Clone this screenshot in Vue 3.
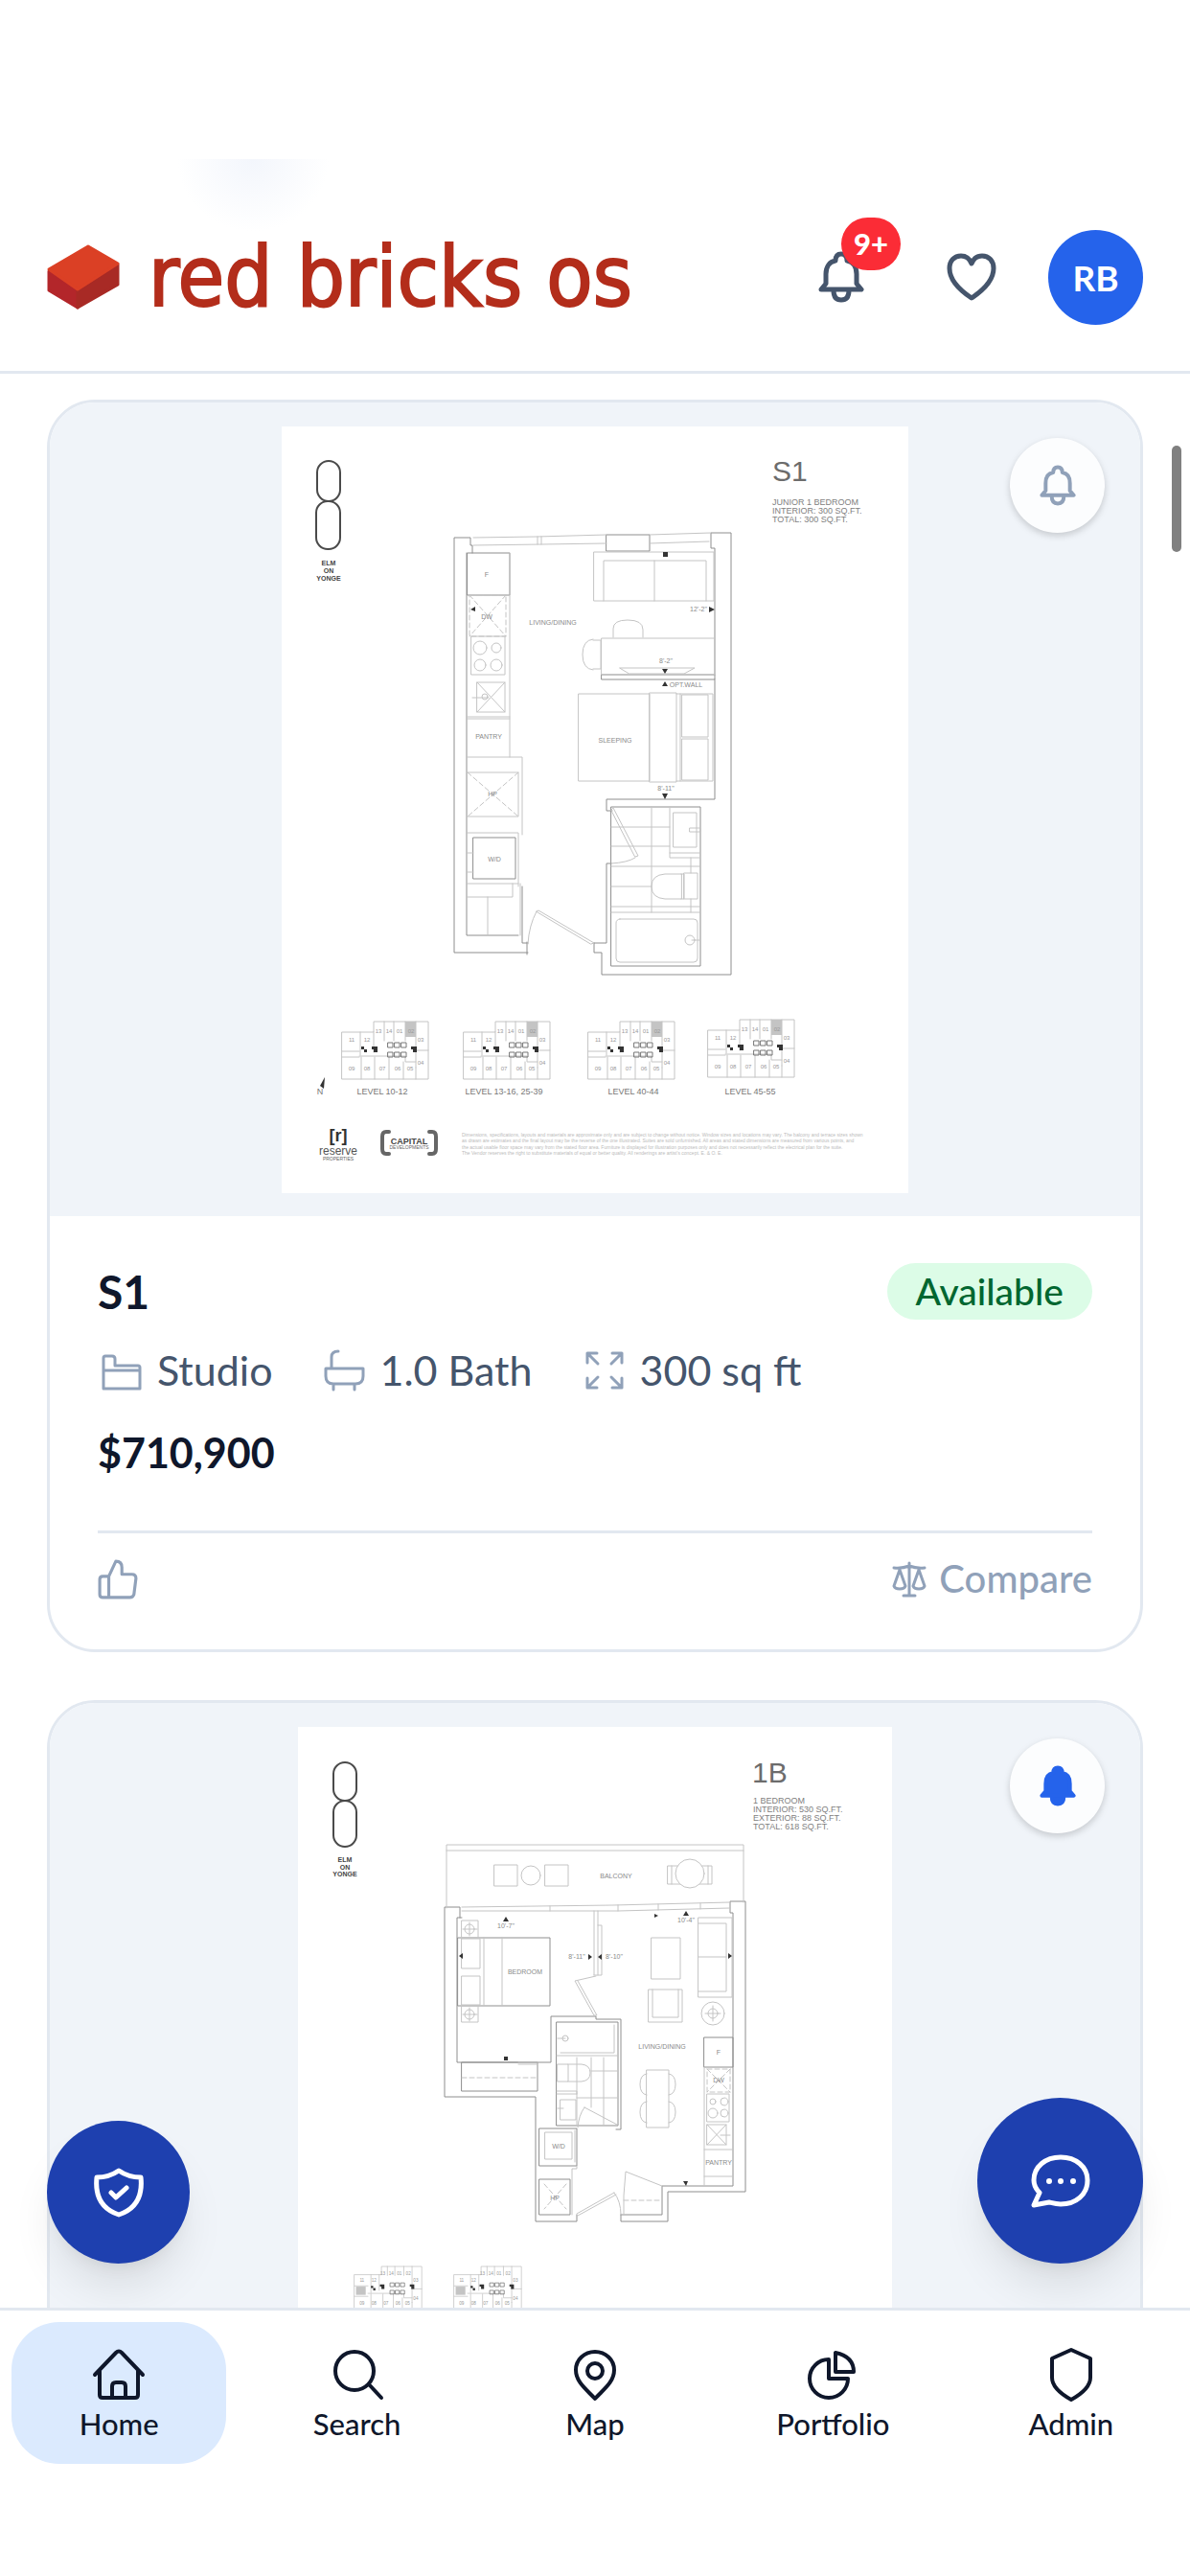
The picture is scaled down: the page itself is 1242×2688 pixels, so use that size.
<script setup>
import { ref } from 'vue'

const active = ref('Home')
const tabs = [
  { name: 'Home', d: 'M3 29 L25 6 Q28 3 31 6 L53 29 M8 24 V50 Q8 53 11 53 H45 Q48 53 48 50 V24 M21 53 V41 Q21 37 25 37 H31 Q35 37 35 41 V53' },
  { name: 'Search', d: 'M5 25 A20 20 0 1 1 45 25 A20 20 0 1 1 5 25 M40 39 L53 53' },
  { name: 'Map', d: 'M28 54 C20 45 8 37 8 24 A20 19 0 0 1 48 24 C48 37 36 45 28 54 Z M20 25 A8 8 0 1 1 36 25 A8 8 0 1 1 20 25' },
  { name: 'Portfolio', d: 'M24 13 A20 20 0 1 0 44 33 H24 Z M31 6 V26 H50 Q50 10 31 6 Z' },
  { name: 'Admin', d: 'M28 3 L48 12 V32 C48 42 37 50 28 55 C19 50 8 42 8 32 V12 Z' }
]

const bell = 'M3 40 L8 34 V24 C8 16 12 11 18 10 C18 5 20 3 24 3 C28 3 30 5 30 10 C36 11 40 16 40 24 V34 L45 40 Z M16 41 C16 48 19 51 24 51 C29 51 32 48 32 41'

const keyPlans = [
  { x: 357, y: 1066, label: 'LEVEL 10-12', cx: 399 },
  { x: 484, y: 1066, label: 'LEVEL 13-16, 25-39', cx: 526 },
  { x: 614, y: 1066, label: 'LEVEL 40-44', cx: 661 },
  { x: 739, y: 1064, label: 'LEVEL 45-55', cx: 783 }
]
const smallKeyPlans = [370, 474]
const rooms = [
  ['11', 10, 21], ['12', 26, 21], ['13', 38, 12], ['14', 49, 12], ['01', 60, 12], ['02', 72, 12],
  ['03', 82, 21], ['04', 82, 45], ['09', 10, 51], ['08', 26, 51], ['07', 42, 51], ['06', 58, 51], ['05', 71, 51]
]
</script>

<template>
  <div class="app">
    <header class="topbar">
      <a class="brand" href="#">
        <svg class="brick" viewBox="0 0 76 68" aria-hidden="true">
          <path d="M2 28 L32 48 V66 L2 48 Z" fill="#b3262a" stroke="#b3262a" stroke-width="3" stroke-linejoin="round" />
          <path d="M32 48 L74 21 V42 L32 66 Z" fill="#a82a25" stroke="#a82a25" stroke-width="3" stroke-linejoin="round" />
          <path d="M2 26 L43 2 L74 20 L32 47 Z" fill="#db4025" stroke="#db4025" stroke-width="3" stroke-linejoin="round" />
        </svg>
        <span class="wordmark">red bricks os</span>
      </a>
      <div class="actions">
        <button class="icon-btn" aria-label="Notifications">
          <svg class="ic-bell" viewBox="0 0 48 54"><path :d="bell" /></svg>
          <span class="count">9+</span>
        </button>
        <button class="icon-btn" aria-label="Favourites">
          <svg class="ic-heart" viewBox="0 0 52 50">
            <path d="M26 47 C14 39 3 28 3 16 C3 8 8 3 15 3 C20 3 24 6 26 11 C28 6 32 3 37 3 C44 3 49 8 49 16 C49 28 38 39 26 47 Z" />
          </svg>
        </button>
        <button class="avatar">RB</button>
      </div>
    </header>

    <main class="feed">
      <article class="card">
        <div class="frame">
          <svg class="plan" viewBox="294 445 654 800">
            <rect class="paper" x="294" y="445" width="654" height="800" />
            <g class="mark">
              <rect x="331" y="481" width="24" height="42" rx="12" />
              <rect x="330" y="523" width="25" height="50" rx="12" />
            </g>
            <g class="elm"><text x="343" y="590">ELM</text><text x="343" y="598">ON</text><text x="343" y="606">YONGE</text></g>
            <text class="unit" x="806" y="502">S1</text>
            <g class="facts">
              <text x="806" y="527">JUNIOR 1 BEDROOM</text>
              <text x="806" y="536">INTERIOR: 300 SQ.FT.</text>
              <text x="806" y="545">TOTAL: 300 SQ.FT.</text>
            </g>
            <g class="wall">
              <path d="M493 577 V569 H491 V561 H474 V994 H551 M550 983 V996 M487 577 V976 H541 M545 925 V984 H551" />
              <path d="M620 984 H633 V901 H638 M620 984 V994 H628 V1017 H763 V556 H742 V572 H746 V704 M628 704 H746 V709 H628 Z M746 709 V834 H633 V846 H639" />
              <rect x="638" y="842" width="93" height="166" />
              <rect x="633" y="558" width="45" height="17" />
              <rect x="488" y="577" width="44" height="44" />
              <rect x="494" y="874" width="44" height="43" />
            </g>
            <g class="thin">
              <path d="M494 561 L560 560 L633 558 M678 558 L742 556 M494 569 L565 568 L633 567 M678 567 L740 565 M561 560 V568 M565 560 V568" />
              <path d="M532 577 V790 M487 748 H532 M487 750 H532 M487 790 H545 V871 M487 869 H541 V925 M487 922 H541 M487 936 H535 V922 M509 936 V976 M543 922 V976 M487 890 H494 M487 910 H494" />
              <rect x="492" y="664" width="35" height="40" />
              <circle cx="501" cy="676" r="7" /><circle cx="518" cy="676" r="5" /><circle cx="501" cy="694" r="6" /><circle cx="518" cy="694" r="6" />
              <path d="M498 712 H527 V743 H498 Z L527 743 M527 712 L498 743 M493 728 H510" /><circle cx="506" cy="727" r="3" />
              <rect x="488" y="806" width="53" height="46" />
              <path d="M620 576 H745 V627 H620 Z M630 627 V585 H737 V627 M683 585 V627" />
              <rect x="628" y="666" width="118" height="38" />
              <path d="M640 665 V656 Q640 647 655 647 Q671 647 671 657 V665 M619 667 Q608 668 608 683 Q608 698 619 699 M619 668 H627 V698 H619" />
              <path d="M647 697 H725 L714 703 H657 Z" />
              <path d="M604 724 H678 V815 H604 Z M678 723 H706 V816 H678 Z M706 724 H744 V815 H706 M710 724 V815 M712 725 H739 V769 H712 Z M712 771 H739 V814 H712 Z" />
              <path d="M638 863 H699 M638 883 H699 M638 904 H731 M638 925 H680 M638 946 H731 M638 952 H731 M680 842 V952 M721 895 V911 M721 938 V952 M699 842 V895 H731 M699 890 H731 M703 848 H727 V884 H703 Z M720 864 H731 V868 H720 Z" />
              <path d="M711 912 H694 Q680 913 680 925 Q680 937 694 938 H711 Z M711 912 H714 V938 H711 M714 911 H728 V938 H714 Z" />
              <rect x="643" y="959" width="85" height="45" rx="4" /><circle cx="720" cy="981" r="5" /><path d="M722 981 H731" />
              <path d="M638 845 L640 843 L666 893 L663 894 Z M663 895 Q655 900 638 901 M560 951 L562 950 L620 984 L617 985 Z M560 951 Q552 966 551 985" />
            </g>
            <path class="thin dash" d="M490 621 H528 V664 H490 Z L528 664 M528 621 L490 664 M488 806 L541 852 M541 806 L488 852" />
            <path class="solid" d="M491 636 l5 -3 v5 z M746 636 l-6 -3 v6 z M692 576 h5 v5 h-5 z M691 698 h6 l-3 5 z M691 716 h6 l-3 -5 z M691 828 h6 l-3 6 z" />
            <g class="tag">
              <text x="508" y="602">F</text><text x="508" y="646">DW</text><text x="510" y="771">PANTRY</text><text x="514" y="831">HP</text><text x="516" y="899">W/D</text>
              <text x="577" y="652">LIVING/DINING</text><text x="642" y="775">SLEEPING</text><text x="729" y="638">12'-2"</text>
              <text x="695" y="692">8'-2"</text><text x="716" y="717">OPT.WALL</text><text x="695" y="825">8'-11"</text>
            </g>
            <g v-for="k in keyPlans" :key="k.label">
              <g :transform="`translate(${k.x} ${k.y})`">
                <rect x="66" y="0" width="11" height="16" fill="#c4c4c4" />
                <path class="thin" d="M0 11 H33 V0 H90 V60 H0 Z M44 0 V20 M54 0 V20 M66 0 V20 M77 0 V48 M19 11 V35 M33 11 V32 M0 31 H18 M18 36 H66 V42 H77 M0 37 H18 M20 37 V60 M34 37 V60 M49 37 V60 M64 42 V60 M77 48 V60 M77 30 H90" />
                <path class="core" d="M48 22 h5 v5 h-5 z M55 22 h5 v5 h-5 z M62 22 h5 v5 h-5 z M48 32 h5 v5 h-5 z M55 32 h5 v5 h-5 z M62 32 h5 v5 h-5 z" />
                <path class="solid" d="M20 26 h3 v3 h3 v3 h-3 v-3 h-3 z M31 26 h6 v6 h-4 v-3 h-2 z M72 26 h6 v6 h-4 v-3 h-2 z" />
                <g class="room"><text v-for="r in rooms" :key="r[0]" :x="r[1]" :y="r[2]">{{ r[0] }}</text></g>
              </g>
              <text class="level" :x="k.cx" y="1142">{{ k.label }}</text>
            </g>
            <path class="solid" d="M339 1124 L334 1133 L338 1136 Z" /><text class="level" x="334" y="1142">N</text>
            <text class="r-logo" x="353" y="1191">[r]</text>
            <text class="r-name" x="353" y="1205">reserve</text>
            <text class="micro" x="353" y="1211">PROPERTIES</text>
            <path class="bracket" d="M406 1181 H403 Q399 1181 399 1186 V1199 Q399 1204 403 1204 H406 M448 1181 H451 Q455 1181 455 1186 V1199 Q455 1204 451 1204 H448" />
            <text class="capital" x="427" y="1194">CAPITAL</text>
            <text class="micro" x="427" y="1199">DEVELOPMENTS</text>
            <g class="fine">
              <text x="482" y="1186">Dimensions, specifications, layouts and materials are approximate only and are subject to change without notice. Window sizes and locations may vary. The balcony and terrace sizes shown</text>
              <text x="482" y="1192">as drawn are estimates and the final layout may be the reverse of the one illustrated. Suites are sold unfurnished. All areas and stated dimensions are measured from various points, and</text>
              <text x="482" y="1199">the actual usable floor space may vary from the stated floor area. Furniture is displayed for illustration purposes only and does not necessarily reflect the electrical plan for the suite.</text>
              <text x="482" y="1205">The Vendor reserves the right to substitute materials of equal or better quality. All renderings are artist's concept. E. &amp; O. E.</text>
            </g>
          </svg>
          <button class="watch" aria-label="Notify me about S1">
            <svg viewBox="0 0 48 54"><path :d="bell" /></svg>
          </button>
        </div>
        <div class="body">
          <div class="row">
            <h2>S1</h2>
            <span class="status">Available</span>
          </div>
          <ul class="specs">
            <li>
              <svg viewBox="0 0 50 50"><path d="M6 44 V12 Q6 10 8 10 H15 Q18 10 18 13 V20 H42 Q44 20 44 22 V44 Z M6 25 H44" /></svg>
              Studio
            </li>
            <li>
              <svg viewBox="0 0 50 50"><path d="M18 5 Q11 5 11 11 V22 M5 23 H44 V31 Q44 39 36 39 H13 Q5 39 5 31 Z M13 39 V45 M35 39 V45" /></svg>
              1.0 Bath
            </li>
            <li>
              <svg viewBox="0 0 50 50"><path d="M7 17 V7 H17 M7 7 L18 18 M33 7 H43 V17 M43 7 L32 18 M7 33 V43 H17 M7 43 L18 32 M33 43 H43 V33 M43 43 L32 32" /></svg>
              300 sq ft
            </li>
          </ul>
          <p class="price">$710,900</p>
          <div class="foot">
            <button class="ghost" aria-label="Like">
              <svg class="ic-thumb" viewBox="0 0 40 40"><path d="M11 17 H5 Q2 17 2 20 V35 Q2 38 5 38 H32 Q35 38 36 35 L38 19 Q38 15 34 15 H24 V8 Q24 2 18 2 L11 17 V38" /></svg>
            </button>
            <button class="ghost">
              <svg class="ic-scale" viewBox="0 0 38 38"><path d="M19 2 V35 M13 36 H25 M3 7 Q11 8 19 5 Q27 8 35 7 M9 9 L3 26 Q4 29 9 29 Q14 29 15 26 Z M29 9 L23 26 Q24 29 29 29 Q34 29 35 26 Z" /></svg>
              Compare
            </button>
          </div>
        </div>
      </article>

      <article class="card">
        <div class="frame">
          <svg class="plan" viewBox="311 1801 620 800">
            <rect class="paper" x="311" y="1801" width="620" height="800" />
            <g class="mark">
              <rect x="348" y="1838" width="24" height="40" rx="12" />
              <rect x="348" y="1878" width="24" height="48" rx="12" />
            </g>
            <g class="elm"><text x="360" y="1942">ELM</text><text x="360" y="1950">ON</text><text x="360" y="1957">YONGE</text></g>
            <text class="unit" x="785" y="1859">1B</text>
            <g class="facts">
              <text x="786" y="1881">1 BEDROOM</text>
              <text x="786" y="1890">INTERIOR: 530 SQ.FT.</text>
              <text x="786" y="1899">EXTERIOR: 88 SQ.FT.</text>
              <text x="786" y="1908">TOTAL: 618 SQ.FT.</text>
            </g>
            <g class="wall">
              <path d="M480 2000 V1989 H464 V2187 H559 V2317 H602 V2310 M648 2310 V2317 H697 V2286 H778 V1983 H762 V1995 H765 V2280 H691 V2310 H648" />
              <path d="M482 2000 H477 V2151 H575 V2103 H622 V2106 H648 V2221 H643" />
              <rect x="581" y="2109" width="64" height="108" />
              <rect x="478" y="2021" width="96" height="71" />
              <rect x="482" y="2151" width="79" height="30" />
              <rect x="563" y="2220" width="39" height="39" />
              <rect x="563" y="2273" width="32" height="37" />
              <rect x="735" y="2125" width="30" height="31" />
            </g>
            <g class="thin">
              <path d="M466 1990 V1924 H776 V1984 M466 1930 H776 M482 1989 L640 1987 L762 1984 M482 1993 H645 L762 1990 M574 1988 V1993 M645 1987 V1993 M687 1986 V1992 M731 1985 V1991" />
              <path d="M516 1945 H540 V1967 H516 Z M569 1945 H593 V1967 H569 Z M697 1946 H743 V1965 H697 Z M701 1946 V1965 M739 1946 V1965" />
              <circle cx="554" cy="1956" r="10" /><circle class="paper" cx="720" cy="1954" r="15" />
              <path d="M505 2021 V2092 M524 2021 V2092 M482 2022 H501 V2053 H482 Z M482 2061 H501 V2091 H482 Z M482 2003 H499 V2021 H482 Z M482 2092 H499 V2109 H482 Z M483 2012 H498 M490 2005 V2019 M483 2101 H498 M490 2094 V2108" />
              <circle cx="490" cy="2012" r="5" /><circle cx="490" cy="2101" r="5" />
              <path d="M620 1993 V2060 M624 1993 V2060 M624 2008 H628 V2060 H620 M622 2061 L600 2066 L620 2102 H623 L603 2066 M541 2151 H561 M541 2153 H561" />
              <path d="M680 2021 H710 V2064 H680 Z M677 2075 H712 V2109 H677 Z M681 2075 V2104 H708 V2075 M729 2000 H764 V2083 H729 Z M729 2006 H758 V2077 H729 M729 2041 H758" />
              <circle cx="744" cy="2100" r="12" /><circle cx="744" cy="2100" r="5" /><path d="M736 2100 H752 M744 2092 V2108" />
              <path d="M581 2144 H645 M585 2141 H641 V2112 M602 2146 V2184 M617 2146 V2198 M630 2146 V2216 M617 2160 H645 M602 2188 H645 M581 2181 H602 V2217 M581 2184 H602 M585 2190 H601 V2211 H585 Z M582 2199 H588" />
              <path d="M582 2153 H593 V2171 H582 Z M593 2153 H607 Q616 2154 616 2162 Q616 2170 607 2171 H593 M582 2126 H590" /><circle cx="590" cy="2126" r="3" />
              <path d="M610 2198 L644 2216 M610 2198 Q604 2206 603 2219 M569 2224 H597 V2252 H569 Z M600 2222 V2255 M602 2259 V2262 H597 V2310 M602 2309 L641 2287 M603 2311 L643 2289 M641 2287 Q648 2296 648 2310" />
              <path d="M651 2310 V2290 L653 2265 L691 2280 M675 2159 H698 V2219 H675 Z M675 2163 Q668 2164 668 2174 Q668 2184 675 2185 M675 2192 Q668 2193 668 2203 Q668 2213 675 2214 M698 2163 Q705 2164 705 2174 Q705 2184 698 2185 M698 2192 Q705 2193 705 2203 Q705 2213 698 2214" />
              <path d="M735 2156 V2280 M735 2242 H765 M735 2270 H765 M738 2184 H761 V2213 H738 Z M738 2216 H758 V2237 H738 Z L758 2237 M758 2216 L738 2237 M752 2227 H762" />
              <circle cx="744" cy="2192" r="3" /><circle cx="756" cy="2192" r="4" /><circle cx="744" cy="2204" r="5" /><circle cx="756" cy="2204" r="4" />
            </g>
            <path class="thin dash" d="M482 2167 H561 M568 2278 L591 2304 M591 2278 L568 2304 M651 2295 H691 M738 2158 H762 V2182 H738 Z L762 2182 M762 2158 L738 2182" />
            <path class="solid" d="M525 2004 l3 -5 l3 5 z M713 1998 l3 -5 l3 5 z M683 1996 l4 2 l-4 2 z M479 2040 l4 -3 v6 z M614 2038 l4 3 l-4 3 z M628 2038 l-4 3 l4 3 z M764 2040 l-4 -3 v6 z M526 2145 h4 v4 h-4 z M713 2275 h5 l-2 5 z" />
            <g class="tag">
              <text x="643" y="1959">BALCONY</text><text x="528" y="2011">10'-7"</text><text x="716" y="2005">10'-4"</text><text x="602" y="2043">8'-11"</text><text x="641" y="2043">8'-10"</text>
              <text x="548" y="2059">BEDROOM</text><text x="691" y="2137">LIVING/DINING</text><text x="750" y="2143">F</text><text x="750" y="2172">DW</text>
              <text x="750" y="2258">PANTRY</text><text x="583" y="2241">W/D</text><text x="579" y="2295">HP</text>
            </g>
            <g v-for="x in smallKeyPlans" :key="x" :transform="`translate(${x} 2364) scale(.78)`">
              <rect x="2" y="27" width="13" height="11" fill="#c4c4c4" />
              <path class="thin" d="M0 11 H36 V0 H90 V60 H0 Z M44 0 V12 M54 0 V12 M66 0 V12 M77 0 V48 M22 11 V35 M33 11 V32 M0 26 H18 M18 36 H66 V42 H77 M0 40 H18 M22 37 V60 M38 37 V60 M52 37 V60 M64 42 V60 M77 48 V60 M77 30 H90" />
              <path class="core" d="M48 22 h5 v5 h-5 z M55 22 h5 v5 h-5 z M62 22 h5 v5 h-5 z M48 32 h5 v5 h-5 z M55 32 h5 v5 h-5 z M62 32 h5 v5 h-5 z" />
              <path class="solid" d="M22 26 h3 v3 h3 v3 h-3 v-3 h-3 z M34 24 h6 v6 h-4 v-3 h-2 z M74 24 h6 v6 h-4 v-3 h-2 z" />
              <g class="room"><text v-for="r in rooms" :key="r[0]" :x="r[1]" :y="r[2]">{{ r[0] }}</text></g>
            </g>
          </svg>
          <button class="watch on" aria-label="Stop notifications for 1B">
            <svg viewBox="0 0 48 54"><path :d="bell" /></svg>
          </button>
        </div>
      </article>

      <div class="scroll-thumb"></div>
      <button class="fab fab-left" aria-label="Verification">
        <svg viewBox="0 0 56 56"><path d="M28 5 Q18 12 5 12 C3 31 10 45 28 51 C46 45 53 31 51 12 Q38 12 28 5 Z M20 28 L25 33 L36 23" /></svg>
      </button>
      <button class="fab fab-right" aria-label="Chat">
        <svg viewBox="0 0 64 60">
          <path d="M4 55 L10 42 C6 38 4 34 4 29 C4 15 16 5 32 5 C48 5 60 15 60 29 C60 44 48 54 32 54 C27 54 24 53 20 52 Z" />
          <path class="dots" d="M20 30 H20 M32 30 H32 M45 30 H45" />
        </svg>
      </button>
    </main>

    <nav class="tabs">
      <button v-for="t in tabs" :key="t.name" class="tab" :class="{ active: active === t.name }" @click="active = t.name">
        <svg viewBox="0 0 56 58"><path :d="t.d" /></svg>
        {{ t.name }}
      </button>
    </nav>
  </div>
</template>

<style>
body {
  margin: 0;
  background: #fff;
}
</style>

<style scoped>
.app {
  display: flex;
  flex-direction: column;
  height: 100vh;
  overflow: hidden;
  background: #fff;
  color: #0f172b;
  font-family: Lato, "Open Sans", sans-serif;
}
button {
  border: 0;
  padding: 0;
  background: none;
  color: inherit;
  font: inherit;
  cursor: pointer;
}
svg {
  display: block;
  fill: none;
  stroke-linecap: round;
  stroke-linejoin: round;
}

.topbar {
  position: relative;
  flex: none;
  display: flex;
  align-items: center;
  justify-content: space-between;
  padding: 227px 49px 36px;
  border-bottom: 3px solid #e2e8f0;
}
.topbar::before {
  content: "";
  position: absolute;
  top: 166px;
  left: 176px;
  width: 176px;
  height: 84px;
  background: radial-gradient(88px 84px at top, #f3f6fc, #fff 90%);
}
.brand {
  position: relative;
  display: flex;
  align-items: center;
  gap: 30px;
  color: #b32d1b;
  text-decoration: none;
}
.brick {
  width: 76px;
  height: 68px;
}
.wordmark {
  font: 88px/100px "DejaVu Sans Condensed", "DejaVu Sans", sans-serif;
  white-space: nowrap;
  -webkit-text-stroke: 2px #b32d1b;
}
.actions {
  display: flex;
  align-items: center;
  gap: 12px;
}
.icon-btn {
  position: relative;
  display: grid;
  place-items: center;
  width: 124px;
  height: 124px;
}
.icon-btn svg {
  stroke: #45556c;
  stroke-width: 5;
}
.ic-bell {
  width: 48px;
  height: 54px;
}
.ic-heart {
  width: 52px;
  height: 50px;
}
.count {
  position: absolute;
  top: 0;
  right: 0;
  width: 62px;
  height: 55px;
  border-radius: 28px;
  background: #fb2c36;
  color: #fff;
  font-size: 31px;
  font-weight: 900;
  line-height: 55px;
  text-align: center;
}
.avatar {
  width: 99px;
  height: 99px;
  margin-left: 6px;
  border-radius: 50%;
  background: #2563eb;
  color: #fff;
  font-size: 37px;
  font-weight: 700;
}

.feed {
  position: relative;
  flex: 1;
  min-height: 0;
  overflow: hidden;
  display: flex;
  flex-direction: column;
  gap: 50px;
  padding: 27px 49px 0;
}
.card {
  flex: none;
  border: 3px solid #e2e8f0;
  border-radius: 50px;
  overflow: hidden;
  background: #fff;
}
.frame {
  position: relative;
  display: flex;
  justify-content: center;
  padding: 25px 25px 24px;
  background: #f0f4f9;
}
.plan {
  height: 800px;
  max-width: 100%;
  font-family: "Liberation Sans", sans-serif;
}
.paper {
  fill: #fff;
}
.mark {
  stroke: #4a4a4a;
  stroke-width: 2;
}
.wall {
  stroke: #8e8e8e;
  stroke-width: 1;
}
.thin {
  stroke: #c4c4c4;
  stroke-width: 1;
}
.dash {
  stroke-dasharray: 5 3;
}
.core {
  stroke: #777;
}
.solid {
  fill: #333;
}
.plan text {
  text-anchor: middle;
}
.plan .unit,
.plan .facts text,
.plan .fine text {
  text-anchor: start;
}
.unit {
  fill: #6c6c6c;
  font-size: 30px;
}
.facts {
  fill: #808080;
  font-size: 9px;
}
.elm {
  fill: #444;
  font-size: 7px;
  font-weight: 700;
}
.tag {
  fill: #8a8a8a;
  font-size: 7px;
}
.room {
  fill: #999;
  font-size: 6px;
}
.level {
  fill: #777;
  font-size: 9px;
}
.r-logo {
  fill: #333;
  font-size: 18px;
  font-weight: 700;
}
.r-name {
  fill: #555;
  font-size: 12px;
}
.capital {
  fill: #444;
  font-size: 9px;
  font-weight: 700;
}
.micro {
  fill: #666;
  font-size: 5px;
}
.bracket {
  stroke: #666;
  stroke-width: 4;
}
.fine {
  fill: #bbb;
  font-size: 5px;
}
.watch {
  position: absolute;
  top: 37px;
  right: 37px;
  display: grid;
  place-items: center;
  width: 99px;
  height: 99px;
  border-radius: 50%;
  background: #fcfdfe;
  box-shadow: 0 3px 9px rgba(0, 0, 0, 0.1), 0 3px 6px rgba(0, 0, 0, 0.08);
}
.watch svg {
  width: 38px;
  height: 43px;
  stroke: #90a1b9;
  stroke-width: 5;
}
.watch.on svg {
  stroke: #2563eb;
  fill: #2563eb;
}

.body {
  padding: 49px 50px 51px;
}
.row {
  display: flex;
  align-items: center;
  justify-content: space-between;
  height: 59px;
}
h2 {
  margin: 0;
  font-size: 48px;
  font-weight: 700;
  line-height: 59px;
}
.status {
  padding: 0 30px;
  border-radius: 30px;
  background: #dcfce7;
  color: #016630;
  font-size: 39px;
  font-weight: 500;
  line-height: 59px;
}
.specs {
  display: flex;
  gap: 50px;
  margin: 22px 0 0;
  padding: 0;
  list-style: none;
  color: #45556c;
  font-size: 43px;
  line-height: 62px;
}
.specs li {
  display: flex;
  align-items: center;
  gap: 12px;
}
.specs svg {
  width: 50px;
  height: 50px;
  stroke: #90a1b9;
  stroke-width: 3;
}
.price {
  margin: 24px 0 0;
  font-size: 43px;
  font-weight: 700;
  line-height: 62px;
}
.foot {
  display: flex;
  align-items: center;
  justify-content: space-between;
  height: 45px;
  margin-top: 50px;
  padding-top: 25px;
  border-top: 3px solid #e2e8f0;
}
.ghost {
  display: flex;
  align-items: center;
  gap: 12px;
  color: #90a1b9;
  font-size: 40px;
  font-weight: 500;
  line-height: 45px;
}
.ghost svg {
  stroke: #90a1b9;
  stroke-width: 3;
}
.ic-thumb {
  width: 42px;
  height: 42px;
}
.ic-scale {
  width: 38px;
  height: 38px;
}

.scroll-thumb {
  position: absolute;
  top: 75px;
  right: 9px;
  width: 10px;
  height: 111px;
  border-radius: 5px;
  background: #808080;
}
.fab {
  position: absolute;
  bottom: 46px;
  display: grid;
  place-items: center;
  border-radius: 50%;
  background: #1e40af;
  box-shadow: 0 31px 47px -9px rgba(0, 0, 0, 0.1), 0 12px 19px -12px rgba(0, 0, 0, 0.1);
}
.fab svg {
  stroke: #fff;
  stroke-width: 5;
}
.fab-left {
  left: 49px;
  width: 149px;
  height: 149px;
}
.fab-left svg {
  width: 56px;
  height: 56px;
}
.fab-right {
  right: 49px;
  width: 173px;
  height: 173px;
}
.fab-right svg {
  width: 64px;
  height: 60px;
}
.dots {
  stroke-width: 6;
}

.tabs {
  flex: none;
  display: grid;
  grid-template-columns: repeat(5, 1fr);
  padding: 12px 0 117px;
  border-top: 3px solid #e2e8f0;
  background: #fff;
}
.tab {
  display: flex;
  flex-direction: column;
  align-items: center;
  gap: 2px;
  height: 148px;
  margin: 0 12px;
  padding-top: 26px;
  box-sizing: border-box;
  border-radius: 50px;
  font-size: 31px;
  font-weight: 500;
  line-height: 40px;
}
.tab svg {
  width: 56px;
  height: 58px;
  stroke: #0f172b;
  stroke-width: 4;
}
.tab.active {
  background: #dbeafe;
}
</style>
